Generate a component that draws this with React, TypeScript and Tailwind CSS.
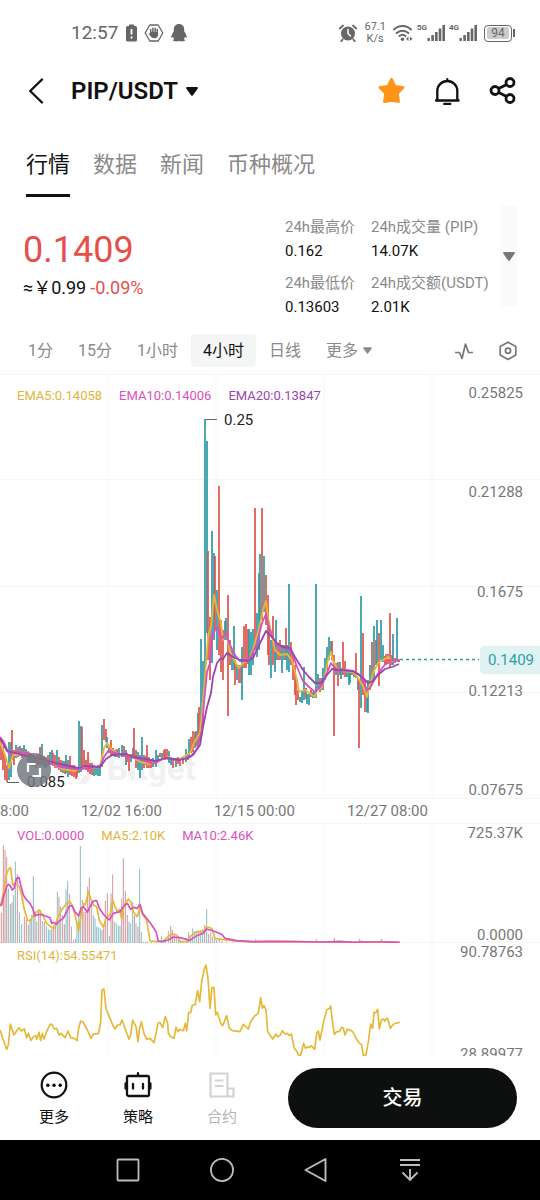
import { useState } from "react";

type Tone = "u" | "d";
type Candle = [number, number, number, Tone];
type Bar = [number, number, Tone];

const TEAL = "#2b9ba3";
const RED = "#e0524b";
const YELLOW = "#e6b836";
const PINK = "#d94fbf";
const PURPLE = "#9a45b0";

const tabs = ["行情", "数据", "新闻", "币种概况"];
const periods = ["1分", "15分", "1小时", "4小时", "日线"];
const priceAxis = ["0.25825", "0.21288", "0.1675", "0.12213", "0.07675"];
const times = ["8:00", "12/02 16:00", "12/15 00:00", "12/27 08:00"];

const stats = [
  { label: "24h最高价", value: "0.162" },
  { label: "24h成交量 (PIP)", value: "14.07K" },
  { label: "24h最低价", value: "0.13603" },
  { label: "24h成交额(USDT)", value: "2.01K" },
];

// x, high, low, direction
const candles: Candle[] = [
  [1, 738, 760, "d"], [3, 746, 770, "d"], [5, 755, 780, "d"], [7, 765, 782, "d"], [9, 742, 780, "u"],
  [11, 742, 777, "u"], [12, 730, 760, "d"], [14, 750, 765, "d"], [16, 745, 758, "u"], [18, 747, 757, "d"],
  [20, 746, 756, "u"], [22, 748, 758, "d"], [24, 745, 757, "u"], [26, 749, 757, "u"], [28, 751, 762, "d"],
  [30, 753, 764, "u"], [32, 755, 766, "d"], [34, 756, 766, "u"], [36, 757, 768, "d"], [38, 754, 765, "d"],
  [40, 747, 765, "d"], [42, 744, 765, "u"], [44, 756, 767, "d"], [46, 757, 768, "u"], [48, 755, 766, "d"],
  [50, 752, 765, "u"], [52, 750, 765, "u"], [53, 753, 766, "d"], [55, 755, 768, "d"], [57, 750, 768, "u"],
  [59, 757, 770, "d"], [61, 760, 772, "d"], [63, 761, 773, "u"], [65, 761, 774, "d"], [66, 755, 773, "u"],
  [68, 760, 777, "u"], [70, 756, 775, "d"], [72, 765, 776, "d"], [74, 765, 777, "d"], [76, 767, 779, "d"],
  [77, 768, 777, "d"], [79, 721, 773, "u"], [81, 726, 772, "u"], [82, 727, 770, "d"], [84, 750, 768, "d"],
  [86, 760, 770, "d"], [88, 752, 772, "d"], [90, 763, 774, "d"], [92, 763, 775, "d"], [94, 765, 776, "u"],
  [96, 766, 775, "u"], [98, 765, 776, "u"], [100, 764, 776, "u"], [102, 725, 767, "u"], [104, 719, 740, "d"],
  [106, 729, 742, "d"], [107, 737, 748, "u"], [109, 747, 753, "d"], [111, 740, 755, "d"], [113, 748, 756, "d"],
  [115, 750, 757, "u"], [117, 749, 757, "d"], [119, 748, 758, "u"], [122, 745, 757, "u"], [124, 746, 757, "d"],
  [126, 750, 765, "u"], [127, 753, 762, "d"], [129, 755, 771, "d"], [131, 754, 762, "u"], [133, 748, 757, "u"],
  [134, 728, 756, "d"], [136, 750, 768, "d"], [138, 752, 770, "u"], [140, 755, 778, "u"], [142, 737, 770, "u"],
  [144, 755, 768, "d"], [146, 756, 765, "u"], [147, 745, 768, "d"], [149, 757, 768, "d"], [151, 759, 768, "d"],
  [153, 758, 767, "u"], [156, 750, 767, "u"], [158, 755, 762, "u"], [160, 753, 757, "d"], [162, 753, 758, "u"],
  [164, 750, 757, "d"], [165, 749, 760, "d"], [167, 749, 757, "d"], [169, 751, 763, "u"], [171, 757, 765, "u"],
  [173, 759, 768, "d"], [176, 758, 767, "u"], [178, 757, 764, "d"], [180, 758, 766, "d"], [183, 757, 764, "d"],
  [186, 749, 762, "u"], [188, 754, 760, "d"], [189, 739, 757, "u"], [191, 737, 753, "d"], [193, 731, 752, "d"],
  [195, 732, 748, "u"], [196, 731, 746, "d"], [198, 713, 745, "u"], [199, 707, 738, "d"], [201, 639, 735, "u"],
  [203, 661, 725, "u"], [205, 419, 690, "u"], [207, 441, 633, "u"], [208, 551, 660, "d"], [210, 617, 680, "d"],
  [212, 531, 663, "u"], [214, 553, 640, "u"], [215, 556, 630, "d"], [217, 590, 650, "u"], [219, 486, 655, "d"],
  [221, 620, 672, "d"], [223, 630, 680, "d"], [225, 621, 640, "u"], [226, 618, 640, "u"], [228, 595, 716, "d"],
  [230, 640, 665, "d"], [232, 650, 670, "u"], [234, 626, 670, "u"], [235, 660, 685, "d"], [237, 665, 680, "u"],
  [239, 665, 683, "d"], [241, 665, 683, "d"], [242, 647, 700, "u"], [244, 626, 668, "d"], [246, 624, 668, "d"],
  [248, 629, 664, "d"], [249, 629, 675, "u"], [251, 632, 675, "u"], [253, 629, 665, "u"], [255, 508, 650, "d"],
  [257, 613, 657, "u"], [259, 573, 650, "u"], [260, 554, 630, "u"], [262, 508, 620, "d"], [264, 556, 612, "u"],
  [266, 575, 625, "d"], [268, 595, 655, "d"], [269, 625, 665, "d"], [271, 640, 678, "u"], [273, 616, 665, "d"],
  [275, 640, 672, "u"], [276, 620, 660, "u"], [278, 645, 660, "d"], [280, 640, 660, "d"], [282, 645, 673, "u"],
  [284, 645, 660, "u"], [286, 628, 660, "d"], [287, 645, 670, "u"], [289, 584, 672, "u"], [291, 642, 665, "d"],
  [293, 655, 680, "d"], [295, 665, 695, "d"], [296, 680, 705, "d"], [298, 690, 700, "d"], [300, 697, 702, "u"],
  [302, 690, 703, "u"], [304, 667, 700, "u"], [306, 688, 699, "d"], [307, 694, 704, "u"], [309, 694, 705, "u"],
  [311, 690, 697, "d"], [313, 692, 698, "u"], [314, 692, 698, "u"], [316, 584, 698, "u"], [318, 674, 688, "u"],
  [320, 678, 692, "d"], [322, 678, 690, "u"], [323, 668, 690, "u"], [325, 658, 680, "u"], [327, 647, 670, "u"],
  [329, 637, 660, "u"], [331, 641, 655, "u"], [332, 641, 660, "d"], [334, 655, 736, "d"], [336, 663, 675, "u"],
  [338, 662, 686, "d"], [340, 662, 675, "u"], [341, 668, 679, "u"], [343, 642, 675, "d"], [345, 661, 677, "d"],
  [347, 670, 677, "u"], [349, 672, 685, "u"], [350, 670, 683, "u"], [352, 670, 675, "d"], [354, 671, 677, "u"],
  [356, 653, 678, "d"], [358, 678, 690, "u"], [359, 680, 748, "d"], [361, 596, 708, "u"], [363, 633, 695, "d"],
  [365, 680, 712, "d"], [367, 690, 712, "u"], [368, 680, 713, "u"], [370, 665, 690, "u"], [372, 642, 685, "d"],
  [374, 626, 680, "u"], [376, 640, 665, "d"], [377, 620, 665, "u"], [379, 633, 686, "d"], [381, 620, 660, "u"],
  [383, 645, 662, "u"], [385, 656, 665, "d"], [386, 654, 665, "d"], [388, 654, 664, "d"], [390, 613, 667, "d"],
  [392, 655, 665, "d"], [393, 634, 665, "u"], [395, 658, 663, "d"], [397, 618, 662, "u"], [399, 659, 662, "d"],
];

const ema5 =
  "0,742 5,755 9,768 13,755 18,755 28,752 40,760 50,763 62,769 75,771 80,767 92,768 100,767 104,748 107,743 112,750 120,755 130,755 140,762 150,764 157,762 168,757 178,760 190,753 195,741 200,733 204,690 208,637 211,627 214,595 217,610 221,623 223,640 225,635 227,636 230,652 235,662 239,668 243,663 248,661 253,650 258,632 263,610 266,601 268,617 271,632 275,650 280,655 287,654 292,660 297,680 299,692 305,690 309,693 315,697 317,690 322,688 325,675 328,660 331,652 333,661 337,668 343,671 353,672 358,678 363,686 367,697 369,688 373,673 378,663 383,660 388,657 392,661 399,661";
const ema10 =
  "0,737 4,742 9,754 15,752 28,753 45,761 60,767 78,769 100,767 104,757 108,751 113,752 125,756 140,759 153,764 165,758 178,760 190,757 197,749 202,730 204,703 207,672 210,663 212,638 215,630 217,627 220,635 223,638 226,633 230,645 235,655 240,661 247,660 252,655 257,643 262,623 266,614 269,627 273,638 278,646 285,648 292,652 297,667 303,681 309,687 315,692 322,685 327,673 331,663 335,668 343,670 353,671 360,675 367,690 370,688 377,675 383,667 389,660 399,661";
const ema20 =
  "0,738 7,751 15,753 28,756 45,760 60,764 78,768 85,766 100,767 106,759 112,755 125,754 135,757 145,759 155,761 165,758 180,760 188,758 193,755 200,745 203,727 207,707 211,693 213,677 217,663 220,659 223,659 227,653 233,657 240,660 248,661 253,658 260,643 266,631 272,637 277,643 283,647 290,648 295,657 303,670 309,677 315,683 321,683 327,675 332,669 337,670 353,671 362,677 368,683 373,681 378,675 385,669 392,667 399,664";

// x, top, direction (volume and RSI panels use a 3x finer grid)
const volumes: Bar[] = [
  [4, 293, "d"], [10, 92, "d"], [15, 105, "d"], [20, 127, "d"], [25, 220, "u"], [31, 267, "u"], [36, 262, "d"],
  [41, 240, "u"], [46, 140, "u"], [52, 178, "d"], [58, 292, "u"], [65, 327, "u"], [73, 305, "d"], [79, 315, "d"],
  [85, 330, "u"], [90, 318, "d"], [95, 300, "u"], [100, 183, "u"], [105, 290, "d"], [110, 320, "u"], [116, 290, "d"],
  [121, 285, "d"], [127, 318, "u"], [133, 320, "d"], [139, 333, "u"], [145, 343, "u"], [150, 345, "u"], [155, 343, "u"],
  [160, 330, "d"], [166, 320, "d"], [172, 230, "u"], [177, 245, "d"], [181, 275, "u"], [187, 300, "d"], [193, 328, "d"],
  [198, 223, "u"], [203, 198, "u"], [208, 237, "d"], [214, 335, "d"], [220, 375, "u"], [226, 370, "d"], [231, 320, "u"],
  [236, 305, "u"], [241, 93, "u"], [247, 255, "d"], [252, 290, "d"], [257, 290, "d"], [263, 215, "d"], [268, 187, "d"],
  [274, 260, "d"], [280, 300, "u"], [285, 310, "u"], [290, 335, "u"], [295, 337, "u"], [301, 340, "u"], [306, 345, "u"],
  [311, 330, "d"], [316, 257, "d"], [322, 235, "d"], [328, 362, "u"], [333, 235, "d"], [338, 178, "d"], [343, 320, "u"],
  [349, 325, "u"], [355, 332, "u"], [360, 333, "u"], [365, 250, "d"], [370, 130, "d"], [376, 228, "d"], [382, 300, "d"],
  [387, 320, "u"], [392, 325, "u"], [398, 262, "u"], [403, 300, "d"], [408, 325, "u"], [414, 335, "d"], [419, 162, "u"],
  [424, 352, "u"], [430, 380, "d"], [436, 380, "u"], [442, 380, "d"], [455, 379, "u"], [470, 380, "d"], [485, 365, "u"],
  [490, 375, "d"], [496, 372, "u"], [505, 348, "u"], [512, 333, "d"], [517, 345, "d"], [523, 355, "d"], [529, 366, "u"],
  [535, 372, "u"], [541, 376, "d"], [548, 377, "d"], [560, 375, "u"], [566, 352, "u"], [572, 360, "d"], [578, 340, "u"],
  [584, 348, "u"], [590, 352, "u"], [596, 348, "d"], [602, 345, "u"], [608, 342, "u"], [614, 330, "d"], [620, 282, "u"],
  [626, 357, "d"], [632, 352, "u"], [638, 365, "d"], [644, 370, "u"], [650, 375, "d"], [658, 374, "u"], [666, 378, "d"],
  [680, 379, "u"], [700, 379, "d"], [767, 373, "d"], [949, 373, "d"], [1003, 368, "d"], [1078, 372, "d"],
  [1084, 374, "u"], [1144, 372, "d"],
];

const volMa5 =
  "0,270 5,260 12,220 20,175 28,160 32,158 38,210 45,205 58,215 65,240 72,280 82,315 90,317 98,305 105,295 118,285 128,300 140,325 155,338 165,340 172,310 185,285 200,265 210,260 218,275 225,300 236,348 243,300 250,265 256,270 265,230 272,250 280,270 290,275 298,315 310,337 318,310 330,300 338,255 345,275 352,290 358,283 365,312 372,270 385,252 393,262 400,290 412,305 420,275 428,300 440,315 450,378 475,380 490,378 505,365 515,357 530,360 540,380 560,381 570,365 590,350 610,350 620,335 635,340 645,370 665,373 700,377 740,381 810,380 870,379 960,381 1020,379 1060,382 1150,380 1199,382";
const volMa10 =
  "0,272 5,270 12,240 20,215 25,208 30,212 37,225 42,220 50,190 57,188 62,210 70,240 80,255 90,265 98,280 105,303 115,298 128,300 150,308 155,325 160,322 168,328 178,318 190,310 200,290 208,273 216,272 225,290 236,303 243,280 250,275 262,292 270,275 280,258 290,257 298,280 312,300 328,315 340,295 360,290 372,272 382,265 392,283 400,277 412,280 420,268 428,295 440,310 455,330 468,350 475,378 485,380 505,375 520,366 540,368 570,376 590,362 610,355 620,342 640,348 665,358 675,370 710,377 760,380 810,379 870,380 960,381 1020,380 1060,382 1090,381 1150,381 1199,382";
const rsi =
  "0,645 8,670 20,703 25,690 31,627 42,660 50,648 57,638 64,648 73,642 80,668 85,655 93,676 100,665 107,662 110,673 117,652 122,677 127,655 132,672 140,650 150,628 156,628 163,642 170,640 177,660 183,655 195,668 204,648 212,668 222,670 231,677 236,640 242,618 250,622 262,645 273,670 280,658 296,655 302,620 306,525 312,522 318,580 328,605 338,630 345,642 353,630 360,630 366,615 377,645 387,673 392,660 398,615 408,635 414,680 418,645 424,620 432,655 440,673 450,670 462,683 468,655 474,625 480,622 488,637 496,605 503,625 505,655 512,665 522,670 528,637 534,650 540,643 550,647 556,625 560,647 566,593 572,593 577,570 585,570 593,527 599,560 605,500 612,465 618,450 624,490 630,580 636,518 642,518 647,600 652,592 662,625 668,632 680,602 688,640 697,647 720,650 730,628 745,642 752,620 762,605 775,595 782,548 787,580 792,572 798,585 803,650 810,660 818,672 828,657 832,665 840,662 847,647 855,657 862,655 868,662 874,657 883,700 890,708 897,723 902,720 911,685 916,700 923,695 928,698 934,692 944,703 950,655 955,648 960,675 970,625 980,585 988,580 992,573 998,625 1003,658 1010,650 1018,650 1025,637 1030,640 1035,660 1042,642 1050,645 1058,650 1068,670 1076,682 1085,690 1090,722 1098,720 1105,680 1112,627 1118,640 1122,592 1128,593 1133,583 1138,642 1144,615 1150,612 1154,618 1160,610 1164,612 1171,640 1180,628 1190,624 1199,622";

function Caret({ className }: { className: string }) {
  return (
    <svg viewBox="0 0 12 9" className={className} fill="currentColor" aria-hidden="true">
      <path d="M1.200 0h9.600c.9 0 1.400 1 .8 1.700L7 8.200c-.5.7-1.500.7-2 0L.4 1.700C-.2 1 .3 0 1.200 0z" />
    </svg>
  );
}

function Signal({ label }: { label: string }) {
  return (
    <div className="flex items-start">
      <span className="text-[8px] leading-none font-bold">{label}</span>
      <svg viewBox="0 0 18 18" className="h-[18px] w-[18px]" fill="currentColor" aria-hidden="true">
        <rect x="0.500" y="14" width="2.400" height="3" />
        <rect x="4.300" y="11" width="2.600" height="6" />
        <rect x="8" y="8" width="2.600" height="9" />
        <rect x="11.700" y="4.500" width="2.600" height="12.500" />
        <rect x="15.400" y="1" width="2.600" height="16" />
      </svg>
    </div>
  );
}

function StatusBar() {
  return (
    <div className="flex h-[66px] items-center justify-between pr-[25px] pl-[71px] text-[#666]">
      <div className="flex items-center gap-2">
        <span className="text-[19px]">12:57</span>
        <div className="flex items-center gap-[7px]">
          <svg viewBox="0 0 11 18" className="h-[18px] w-[11px]" aria-hidden="true">
            <path d="M3 .5h5v1.500h1.500A1.500 1.500 0 0 1 11 3.500v12.500a1.500 1.500 0 0 1-1.500 1.500h-8A1.500 1.500 0 0 1 0 16V3.500A1.500 1.500 0 0 1 1.500 2H3z" fill="currentColor" />
            <path d="M5.500 5v5.500M5.500 12.500v2" stroke="#fff" strokeWidth="1.800" />
          </svg>
          <svg viewBox="0 0 20 18" className="h-[18px] w-5" aria-hidden="true">
            <path d="M5.800 1h8.400L18.800 9l-4.600 8H5.800L1.200 9z" fill="none" stroke="currentColor" strokeWidth="1.300" strokeLinejoin="round" />
            <path d="M6.700 9.300V5.500M8.900 8V4.300M11.100 8V4.300M13.200 9V5.300" stroke="currentColor" strokeWidth="1.500" strokeLinecap="round" />
            <path d="M6 8h8v3c0 2-1.200 3.200-3.400 3.200-2.300 0-3.400-1-4.600-2.700L4.300 9.600l1-.5L6 10z" fill="currentColor" />
          </svg>
          <svg viewBox="0 0 16 18" className="h-[18px] w-4" fill="currentColor" aria-hidden="true">
            <path d="M8 0c3.200 0 5.200 2.300 5.200 5.500v1.700c1.200 1.800 2.600 4 2.600 5.800 0 1.300-.8 1.200-1.800-.2-.2.900-.6 1.600-1.200 2.300 1 .5 1.400 1 1 1.700-.4.600-4 .8-5.800.3-1.800.5-5.400.3-5.800-.3-.4-.7 0-1.200 1-1.700-.6-.7-1-1.400-1.200-2.300-1 1.400-1.800 1.500-1.800.2 0-1.800 1.400-4 2.600-5.800V5.500C2.800 2.300 4.800 0 8 0z" />
          </svg>
        </div>
      </div>

      <div className="flex items-center">
        <svg viewBox="0 0 18 18" className="h-[18px] w-[18px]" aria-hidden="true">
          <circle cx="9" cy="9.500" r="7" fill="currentColor" />
          <path d="M.8 4.500 4 1.500M17.200 4.500 14 1.500M3.500 15.500l-1.200 1.700M14.500 15.500l1.200 1.700" stroke="currentColor" strokeWidth="1.800" strokeLinecap="round" />
          <path d="M9 5.500v4l2.500 2.500" fill="none" stroke="#fff" strokeWidth="1.500" strokeLinecap="round" />
        </svg>
        <div className="ml-[7px] flex flex-col text-center text-[11px] leading-3">
          <span>67.1</span>
          <span>K/s</span>
        </div>
        <svg viewBox="0 0 20 18" className="ml-[7px] h-[18px] w-5" aria-hidden="true">
          <path d="M1 5.500a12 12 0 0 1 17 0M3.700 9a8.500 8.500 0 0 1 11.600 0M6.500 12a4.500 4.500 0 0 1 6 0" fill="none" stroke="currentColor" strokeWidth="1.900" strokeLinecap="round" />
          <circle cx="9.500" cy="15.300" r="1.700" fill="currentColor" />
          <path d="M15.500 12.500v4.500L13 14.700zM17 12.500v4.500l2.500-2.300z" fill="currentColor" />
        </svg>
        <div className="ml-1 flex gap-1">
          <Signal label="5G" />
          <Signal label="4G" />
        </div>
        <div className="ml-[7px] flex h-[17px] w-7 items-center rounded border border-[#666] p-[2px]">
          <span className="flex-1 rounded-xs bg-[#ccc] text-center text-xs leading-[12px]">94</span>
        </div>
        <span className="ml-px h-2 w-[2px] bg-[#666]" />
      </div>
    </div>
  );
}

function Header() {
  return (
    <header className="flex h-[50px] items-center pr-[23px] pl-7">
      <button aria-label="返回">
        <svg viewBox="0 0 16 26" className="h-[26px] w-4" fill="none" stroke="#111" strokeWidth="2.400" strokeLinecap="round" strokeLinejoin="round">
          <path d="M14 1.500 2.200 13 14 24.500" />
        </svg>
      </button>
      <button className="ml-[27px] flex items-center gap-2 text-[#111]">
        <h1 className="text-2xl font-semibold">PIP/USDT</h1>
        <Caret className="h-[9px] w-3" />
      </button>
      <div className="ml-auto flex items-center gap-7">
        <button aria-label="收藏">
          <svg viewBox="0 0 28 28" className="h-7 w-7" fill="#ff9417" stroke="#ff9417" strokeWidth="2.500" strokeLinejoin="round">
            <path d="m14.500 2 3.600 7.200 8.200 1.300-5.800 6 1.200 8.200-7.200-1.300-7.200 1.300 1.200-8.200-5.800-6 8.200-1.300z" />
          </svg>
        </button>
        <button aria-label="提醒">
          <svg viewBox="0 0 28 28" className="h-7 w-7" fill="none" stroke="#111" strokeWidth="2.300" strokeLinecap="round">
            <path d="M4.300 23.300V14a9.900 9.900 0 0 1 20 0v9.300M3 23.500h22.600M14.300 4V2.200" />
            <path d="M11.300 26.900h6" />
          </svg>
        </button>
        <button aria-label="分享">
          <svg viewBox="0 0 28 28" className="h-7 w-7" fill="none" stroke="#111" strokeWidth="2.800">
            <circle cx="6" cy="13.500" r="4" />
            <circle cx="21" cy="5.500" r="4" />
            <circle cx="21" cy="21.500" r="4" />
            <path d="m9.700 11.600 8-4.200M9.700 15.400l8 4.200" />
          </svg>
        </button>
      </div>
    </header>
  );
}

function PriceSummary() {
  return (
    <section className="mt-[9px] flex items-start pr-[23px] pl-[23px]">
      <div className="flex-1 pt-5">
        <div className="text-4xl leading-[48px] text-[#e5504a]">0.1409</div>
        <div className="flex gap-1 text-lg leading-7 text-[#111]">
          <span>≈￥0.99</span>
          <span className="text-[#e5504a]">-0.09%</span>
        </div>
      </div>
      <dl className="grid grid-cols-[70px_118px] gap-x-4 gap-y-2 pt-[9px] text-[15px] leading-6 whitespace-nowrap">
        {stats.map((item) => (
          <div key={item.label}>
            <dt className="text-[#8a8a8a]">{item.label}</dt>
            <dd className="text-[#111]">{item.value}</dd>
          </div>
        ))}
      </dl>
      <button aria-label="展开" className="ml-[11px] flex h-[100px] w-[17px] items-center justify-center bg-[#fafafa] text-[#777]">
        <Caret className="h-[9px] w-3" />
      </button>
    </section>
  );
}

function Grid({ top, bottom, step, width }: { top: number; bottom: number; step: number; width: number }) {
  return (
    <g stroke="#f6f6f6" strokeWidth={width}>
      {[1, 2, 3, 4].map((n) => (
        <line key={n} x1={n * step} x2={n * step} y1={top} y2={bottom} />
      ))}
    </g>
  );
}

function PriceChart() {
  return (
    <div className="relative">
      <svg viewBox="0 374 540 426" className="block w-full" fill="none">
        <Grid top={374} bottom={798} step={108} width={1} />
        <path d="M0 374.500H540M0 479.500H540M0 586.500H540M0 692.500H540M0 798.500H540" stroke="#f5f5f5" />

        {/* watermark */}
        <path d="M80 757h9l9 12-12 15h-8l12-15z" fill="#f1f1f1" />
        <text x="107" y="780" fontSize="33" fontWeight="700" fill="#f1f1f1">
          Bitget
        </text>

        {candles.map(([x, high, low, tone]) => (
          <line key={x} x1={x} x2={x} y1={high} y2={low} stroke={tone === "u" ? TEAL : RED} strokeWidth="1.700" />
        ))}

        <g strokeWidth="1.800" strokeLinejoin="round">
          <polyline points={ema5} stroke={YELLOW} />
          <polyline points={ema10} stroke={PINK} />
          <polyline points={ema20} stroke={PURPLE} />
        </g>

        <path d="M205 419.500H217M7 782.500H19" stroke="#666" />
        <g fontSize="15" fill="#222">
          <text x="224" y="425">0.25</text>
          <text x="27" y="787">0.085</text>
        </g>
        <line x1="400" x2="479" y1="659.500" y2="659.500" stroke="#25a58c" strokeWidth="1.500" strokeDasharray="3 3" />
      </svg>

      <div className="absolute top-3 left-[17px] flex gap-[17px] text-[13px] leading-5">
        <span className="text-[#e0b53a]">EMA5:0.14058</span>
        <span className="text-[#d94fbf]">EMA10:0.14006</span>
        <span className="text-[#9a45b0]">EMA20:0.13847</span>
      </div>
      <div className="absolute inset-y-0 right-[17px] flex flex-col justify-between pt-[9px] text-right text-[15px] leading-5 text-[#777]">
        {priceAxis.map((price) => (
          <span key={price}>{price}</span>
        ))}
      </div>
      <span className="absolute top-[272px] right-0 rounded-l bg-[#e0f2f2] py-1 pr-[6px] pl-2 text-[15px] leading-5 text-[#2f9fa6]">
        0.1409
      </span>
      <button aria-label="全屏" className="absolute bottom-[13px] left-[17px] flex h-[34px] w-[34px] items-center justify-center rounded-full bg-[#747a83]/85">
        <svg viewBox="0 0 16 16" className="h-4 w-4" fill="none" stroke="#fff" strokeWidth="2.200">
          <path d="M2 10V2h7.500M6.500 14H14V6" />
        </svg>
      </button>
    </div>
  );
}

function VolumeChart() {
  return (
    <div className="relative border-t border-[#f4f4f4]">
      <svg viewBox="0 27 1620 357" className="block w-full" fill="none">
        <Grid top={24} bottom={384} step={324} width={3} />
        <path d="M0 382.500H1620" stroke="#f4f4f4" strokeWidth="3" />
        {volumes.map(([x, top, tone]) => (
          <line key={x} x1={x} x2={x} y1={top} y2="384" stroke={tone === "u" ? "#6fb0b4" : "#c97f85"} strokeWidth="2.500" />
        ))}
        <g strokeWidth="5" strokeLinejoin="round">
          <polyline points={volMa5} stroke={YELLOW} />
          <polyline points={volMa10} stroke={PINK} />
        </g>
      </svg>
      <div className="absolute top-[2px] left-[17px] flex gap-[17px] text-[13px] leading-5">
        <span className="text-[#d94fbf]">VOL:0.0000</span>
        <span className="text-[#e0b53a]">MA5:2.10K</span>
        <span className="text-[#d94fbf]">MA10:2.46K</span>
      </div>
      <div className="absolute -top-px right-[17px] flex flex-col gap-[82px] text-right text-[15px] leading-5 text-[#777]">
        <span>725.37K</span>
        <span>0.0000</span>
      </div>
    </div>
  );
}

function RsiChart() {
  return (
    <div className="relative overflow-hidden">
      <svg viewBox="0 384 1620 339" className="block w-full" fill="none">
        <Grid top={384} bottom={723} step={324} width={3} />
        <polyline points={rsi} stroke={YELLOW} strokeWidth="5" strokeLinejoin="round" />
      </svg>
      <span className="absolute top-[3px] left-[17px] text-[13px] leading-5 text-[#e0b53a]">RSI(14):54.55471</span>
      <div className="absolute -top-px right-[17px] flex flex-col gap-[82px] text-right text-[15px] leading-5 text-[#777]">
        <span>90.78763</span>
        <span>28.89977</span>
      </div>
    </div>
  );
}

function ActionBar() {
  return (
    <footer className="flex h-[84px] items-center pr-[23px] pl-3">
      <div className="grid grid-cols-[84px_84px_84px] pt-1 text-[15px] leading-6 text-[#111]">
        <button className="flex flex-col items-center gap-[6px]">
          <svg viewBox="0 0 28 28" className="h-7 w-7" aria-hidden="true">
            <circle cx="14" cy="14" r="12.300" fill="none" stroke="#111" strokeWidth="2.200" />
            <circle cx="7.800" cy="14.300" r="1.700" />
            <circle cx="14" cy="14.300" r="1.700" />
            <circle cx="20.200" cy="14.300" r="1.700" />
          </svg>
          更多
        </button>
        <button className="flex flex-col items-center gap-[6px]">
          <svg viewBox="0 0 28 28" className="h-7 w-7" fill="none" stroke="#111" strokeWidth="2.300" strokeLinecap="round" aria-hidden="true">
            <rect x="3" y="5" width="22" height="20" rx="1.500" />
            <path d="M14 4.500V2.200M1.600 12.500v5M26.400 12.500v5M9 13v4.500M19 13v4.500" />
          </svg>
          策略
        </button>
        <button disabled className="flex flex-col items-center gap-[6px] text-[#b5b5b5]">
          <svg viewBox="0 0 28 28" className="h-7 w-7" fill="none" stroke="#d2d2d2" strokeWidth="2.200" aria-hidden="true">
            <path d="M19.500 25.500H2.500V2.500h17v23zM19.500 17.500h6v8h-6M7 9.500h8.500M7 15h8.500" />
          </svg>
          合约
        </button>
      </div>
      <button className="ml-6 h-[60px] flex-1 rounded-full bg-[#0e100f] text-xl font-medium text-white">交易</button>
    </footer>
  );
}

function SystemNav() {
  return (
    <nav className="flex h-[60px] items-center justify-center gap-[70px] bg-black pr-[2px]">
      <button aria-label="最近任务">
        <svg viewBox="0 0 24 24" className="h-6 w-6" fill="none" stroke="#bdbdbd" strokeWidth="1.800">
          <rect x="1.500" y="1.500" width="21" height="21" rx="1" />
        </svg>
      </button>
      <button aria-label="主页">
        <svg viewBox="0 0 26 26" className="h-6 w-6" fill="none" stroke="#bdbdbd" strokeWidth="1.900">
          <circle cx="13" cy="13" r="12" />
        </svg>
      </button>
      <button aria-label="后退">
        <svg viewBox="0 0 24 24" className="h-6 w-6" fill="none" stroke="#bdbdbd" strokeWidth="1.900" strokeLinejoin="round">
          <path d="M21.500 1v22L1.500 12z" />
        </svg>
      </button>
      <button aria-label="下拉通知">
        <svg viewBox="0 0 24 24" className="h-6 w-6" fill="none" stroke="#bdbdbd" strokeWidth="1.900">
          <path d="M2 2h20M2 7h20M12 11v11M4.500 14.500 12 22l7.500-7.500" />
        </svg>
      </button>
    </nav>
  );
}

export default function App() {
  const [tab, setTab] = useState("行情");
  const [period, setPeriod] = useState("4小时");

  return (
    <main className="bg-white font-[Roboto,'Noto_Sans_CJK_SC',sans-serif]">
      <StatusBar />
      <Header />

      {/* TABS */}
      <div className="mt-[33px] flex gap-[23px] pl-[26px]">
        {tabs.map((name) => (
          <button
            key={name}
            onClick={() => setTab(name)}
            className={`h-12 border-b-3 pb-[13px] text-[22px] leading-8 ${
              tab === name ? "border-[#111] text-[#111]" : "border-transparent text-[#8a8a8a]"
            }`}
          >
            {name}
          </button>
        ))}
      </div>

      <PriceSummary />

      {/* PERIODS */}
      <div className="mt-[15px] flex items-center gap-px pr-[22px] pb-[7px] pl-4 text-base text-[#8a8a8a]">
        {periods.map((name) => (
          <button
            key={name}
            onClick={() => setPeriod(name)}
            className={`h-[33px] rounded px-3 ${period === name ? "bg-[#f4f5f5] text-[#111]" : ""}`}
          >
            {name}
          </button>
        ))}
        <button className="flex h-[33px] items-center gap-[5px] px-3">
          更多
          <Caret className="h-[7px] w-[9px]" />
        </button>
        <div className="ml-auto flex gap-6 text-[#777]">
          <button aria-label="指标">
            <svg viewBox="0 0 20 20" className="h-5 w-5" fill="none" stroke="currentColor" strokeWidth="1.700" strokeLinejoin="round">
              <path d="M1 11.500h4.500l2.500 6L11.500 3l3 8.500H19" />
            </svg>
          </button>
          <button aria-label="设置">
            <svg viewBox="0 0 20 20" className="h-5 w-5" fill="none" stroke="currentColor" strokeWidth="1.700" strokeLinejoin="round">
              <path d="m10 1.200 7.800 4.300v8.600L10 18.500l-7.800-4.400V5.500z" />
              <circle cx="10" cy="9.800" r="2.600" />
            </svg>
          </button>
        </div>
      </div>

      <PriceChart />
      <div className="flex h-[23px] items-center gap-[52px] text-[15px] whitespace-nowrap text-[#777]">
        {times.map((time) => (
          <span key={time}>{time}</span>
        ))}
      </div>
      <VolumeChart />
      <RsiChart />
      <ActionBar />
      <SystemNav />
    </main>
  );
}
